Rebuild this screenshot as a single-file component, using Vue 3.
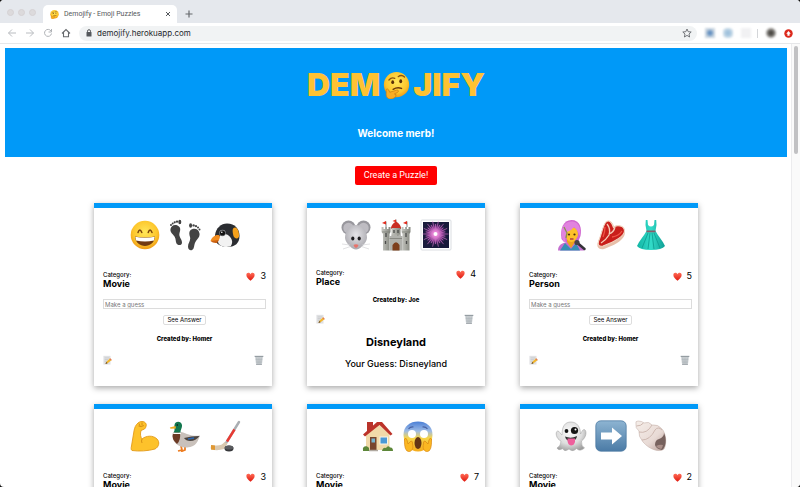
<script setup>
import { ref } from 'vue'

const puzzles = ref([
  { id: 1, emojis: ['grin', 'feet', 'penguin'], category: 'Movie', likes: 3, author: 'Homer', guess: '' },
  { id: 2, emojis: ['mouse', 'castle', 'firework'], category: 'Place', likes: 4, author: 'Joe', guess: 'Disneyland', answer: 'Disneyland', solved: true },
  { id: 3, emojis: ['singer', 'steak', 'dress'], category: 'Person', likes: 5, author: 'Homer', guess: '' },
  { id: 4, emojis: ['muscle', 'duck', 'hockey'], category: 'Movie', likes: 3, author: 'Homer', guess: '' },
  { id: 5, emojis: ['house', 'scream'], category: 'Movie', likes: 7, author: 'Homer', guess: '' },
  { id: 6, emojis: ['ghost', 'arrow', 'shell'], category: 'Movie', likes: 2, author: 'Joe', guess: '' },
])

const rays = Array.from({ length: 28 }, (_, i) => {
  const a = (i * Math.PI) / 14
  const r = i % 2 ? 10 : 13
  return { x: 15.5 + Math.cos(a) * r, y: 15 + Math.sin(a) * r }
})
</script>

<template>
  <svg class="sprite" aria-hidden="true">
    <defs>
      <radialGradient id="gFace" cx=".5" cy=".4" r=".6">
        <stop offset="0" stop-color="#ffe75a" /><stop offset=".7" stop-color="#fdc62c" /><stop offset="1" stop-color="#ee9a16" />
      </radialGradient>
      <linearGradient id="gScream" x1="0" y1="0" x2="0" y2="1">
        <stop offset="0" stop-color="#4a7fd6" /><stop offset=".32" stop-color="#9dbbe6" /><stop offset=".55" stop-color="#f7d54a" /><stop offset="1" stop-color="#f5ab1b" />
      </linearGradient>
      <linearGradient id="gArrow" x1="0" y1="0" x2="0" y2="1">
        <stop offset="0" stop-color="#8db4d2" /><stop offset="1" stop-color="#4b7ba6" />
      </linearGradient>
      <radialGradient id="gGhost" cx=".45" cy=".35" r=".7">
        <stop offset="0" stop-color="#fafafa" /><stop offset=".6" stop-color="#dedede" /><stop offset="1" stop-color="#9c9c9c" />
      </radialGradient>
      <radialGradient id="gMouse" cx=".5" cy=".4" r=".65">
        <stop offset="0" stop-color="#e6e5e9" /><stop offset="1" stop-color="#a5a4aa" />
      </radialGradient>
      <linearGradient id="gStone" x1="0" y1="0" x2="1" y2="0">
        <stop offset="0" stop-color="#c6c7c1" /><stop offset="1" stop-color="#85877f" />
      </linearGradient>
      <radialGradient id="gBurst">
        <stop offset="0" stop-color="#fff" /><stop offset=".2" stop-color="#f79be0" /><stop offset=".6" stop-color="#9a3a9d" stop-opacity=".7" /><stop offset="1" stop-color="#30204f" stop-opacity="0" />
      </radialGradient>
      <linearGradient id="gDress" x1="0" y1="0" x2="1" y2="0">
        <stop offset="0" stop-color="#12b5a4" /><stop offset=".5" stop-color="#32dbc8" /><stop offset="1" stop-color="#0f9f95" />
      </linearGradient>
      <linearGradient id="gShell" x1="0" y1="0" x2="1" y2="1">
        <stop offset="0" stop-color="#f6efea" /><stop offset=".6" stop-color="#e8dad5" /><stop offset="1" stop-color="#b59b95" />
      </linearGradient>
      <linearGradient id="gHeart" x1="0" y1="0" x2="0" y2="1">
        <stop offset="0" stop-color="#ff6a55" /><stop offset="1" stop-color="#e0190f" />
      </linearGradient>
    </defs>

    <symbol id="thinking" viewBox="0 0 32 32">
      <circle cx="16" cy="15" r="15" fill="url(#gFace)" />
      <ellipse cx="11.500" cy="12" rx="1.700" ry="2.300" fill="#5a2f08" />
      <ellipse cx="21" cy="11" rx="1.700" ry="2.300" fill="#5a2f08" />
      <path d="M7 9.500Q10 6 14 7.500M18 5.500Q22 2.500 25.500 6" stroke="#8a5410" stroke-width="1.500" fill="none" stroke-linecap="round" />
      <path d="M12 20.500Q17 17.500 22 19.500" stroke="#6d3a0b" stroke-width="1.600" fill="none" stroke-linecap="round" />
      <path d="M4 23C3 20.500 5 19 6.500 21L8 24L16 21.500C18.500 21 19.200 23.300 17 24.300L13.500 26L15.500 27C15.500 30 12.500 32 9 32C5 32 3 29 4 23Z" fill="#f9ad24" stroke="#c67a12" stroke-width=".8" />
    </symbol>

    <symbol id="grin" viewBox="0 0 32 32">
      <circle cx="16" cy="16" r="14.300" fill="url(#gFace)" />
      <path d="M9 13.500Q10.800 8.500 12.800 13.500M19.200 13.500Q21 8.500 23 13.500" fill="none" stroke="#7b430b" stroke-width="1.500" stroke-linecap="round" />
      <path d="M6 17.500Q16 19.500 26 17.500C25.500 30 6.500 30 6 17.500Z" fill="#713a12" />
      <path d="M6.300 17.800Q16 19.700 25.700 17.800L25 21.500Q16 23.500 7 21.500Z" fill="#fff" />
    </symbol>

    <symbol id="feet" viewBox="0 0 32 32">
      <g fill="#434343">
        <path d="M1.500 10C2 7 5 5 8.500 6.500C12 8 11.500 11 10.500 14C9.500 18 13 20 13 23.500C13 26.800 8.500 27 7.300 24C6.500 22 7 20 5.500 17.500C3.500 14.500 1 13.500 1.500 10Z" />
        <circle cx="2" cy="6" r="1" /><circle cx="3.700" cy="4.500" r="1" /><circle cx="5.700" cy="3.300" r="1.100" /><circle cx="8" cy="2.600" r="1.200" /><ellipse cx="10.800" cy="3" rx="1.500" ry="2.300" />
        <path d="M30.500 14.500C30 11 27 9 23.500 10C19.500 11.500 20 15 21 18C22 22 19 24 19 27.500C19 31.700 23 32.500 24.500 29.500C25.500 27 25 25 27 22C29 19 31 18 30.500 14.500Z" />
        <circle cx="30.500" cy="10.500" r="1" /><circle cx="29" cy="8.500" r="1" /><circle cx="27" cy="7.200" r="1.100" /><circle cx="24.600" cy="6.400" r="1.200" /><ellipse cx="21.600" cy="6.500" rx="1.500" ry="2.300" />
      </g>
    </symbol>

    <symbol id="penguin" viewBox="0 0 32 32">
      <path d="M6 16C7 9 12 4.500 18 4.500C26 4.500 30.500 10 30.500 17C30.500 24 26 28 19 28C12 28 6 25 6 19Z" fill="#2b2d31" />
      <path d="M9 22C9 17 14 13.500 18 15.500C22.500 18 25 23 21.500 27.500C15 29 9 27 9 22Z" fill="#f2f2f2" />
      <path d="M24.500 9C27.500 6.500 30.500 12 30 17.500C28.500 21 25.500 19.500 24.500 17C23.800 14.500 23 10.500 24.500 9Z" fill="#f5a11c" />
      <path d="M1.500 22C3 18 7 15 10.500 16.500C11.500 19 10 22 7 22.500Z" fill="#f28c1e" />
      <path d="M1.500 22L10 21L8 24Q4 24.500 1.500 22Z" fill="#c96012" />
      <circle cx="13.500" cy="14" r="3.200" fill="#8d9094" /><circle cx="13.500" cy="14" r="2.600" fill="#111" /><circle cx="12.800" cy="13.300" r=".8" fill="#fff" />
    </symbol>

    <symbol id="mouse" viewBox="0 0 32 32">
      <circle cx="8.500" cy="8.500" r="7" fill="#98979d" /><circle cx="8.500" cy="9" r="5.200" fill="#bebcc2" />
      <circle cx="23.500" cy="8.500" r="7" fill="#98979d" /><circle cx="23.500" cy="9" r="5.200" fill="#bebcc2" />
      <path d="M16 6C23 6 27 12 27 19C26.500 24 20 30.500 16 30.500C12 30.500 5.500 24 5 19C5 12 9 6 16 6Z" fill="url(#gMouse)" />
      <path d="M10 26L2 25M10.500 27.500L3 30M22 26L30 25M21.500 27.500L29 30" stroke="#d4d4d7" stroke-width=".7" />
      <ellipse cx="12.800" cy="19.500" rx="1.600" ry="2" fill="#201f21" /><ellipse cx="19.200" cy="19.500" rx="1.600" ry="2" fill="#201f21" />
      <path d="M13.500 26Q16 24.500 18.500 26Q17.500 29 16 29Q14.500 29 13.500 26Z" fill="#e8726a" />
    </symbol>

    <symbol id="castle" viewBox="0 0 32 32">
      <path d="M6 8V2.500M16 4V.5M27 8V2.500" stroke="#666" stroke-width=".8" />
      <path d="M6 2L2 4L6 5.500ZM27 2L23 4L27 5.500ZM16 .5L12.500 2L16 3.300Z" fill="#e22b1d" />
      <path d="M11 10Q11 5 16 2.500Q21 5 21 10Z" fill="#c92f24" />
      <rect x="11.500" y="9" width="9" height="10" fill="url(#gStone)" />
      <path d="M1.500 8H3.500V10H5V8H7V10H8.500V8H10.500V13L9.500 15V31.500H3V15L1.500 13Z" fill="url(#gStone)" />
      <path d="M21.500 8H23.500V10H25V8H27V10H28.500V8H30.500V13L29.500 15V31.500H22.500V15L21.500 13Z" fill="url(#gStone)" />
      <path d="M9.500 17H11.500V15.500H13.500V17H15V15.500H17V17H18.500V15.500H20.500V17H22.500V31.500H9.500Z" fill="#b0b1ac" />
      <path d="M12.500 31.500V26Q16 20.500 19.500 26V31.500Z" fill="#7d3f1d" />
      <path d="M6 14V18M26 14V18M14 11V14M18 11V14M5.500 22V25M26.500 22V25" stroke="#4a4b4a" stroke-width="1.300" />
      <path d="M2 13H10M22 13H30M9.500 19.500H22" stroke="#777971" stroke-width=".7" />
    </symbol>

    <symbol id="firework" viewBox="0 0 32 32">
      <rect x="1" y="1" width="30" height="30" rx="1" fill="#fff" stroke="#d2d5da" stroke-width=".8" />
      <rect x="3" y="3" width="26" height="26" fill="#181a3b" />
      <circle cx="15.500" cy="15" r="12" fill="url(#gBurst)" />
      <path v-for="(ray, i) in rays" :key="i" :d="`M15.5 15L${ray.x} ${ray.y}`" stroke="#e07bd3" stroke-width=".6" />
      <circle cx="15.500" cy="15" r="2" fill="#fff" />
    </symbol>

    <symbol id="singer" viewBox="0 0 32 32">
      <path d="M6.500 20C5 10 8 1 16.500 1C25 1 27 9 25.500 17L23 23H9Z" fill="#d066cf" />
      <path d="M3 31.500C3 26 7 24 12 23H20C25 24 29 27 29 31.500Z" fill="#c46fd0" />
      <path d="M5 31.500L10 24L16 30L21 24L25 31.500Z" fill="#358fb5" />
      <path d="M12 23L16 29L20 23V19H12Z" fill="#eda21c" />
      <path d="M10 12C10 8 14 7 17 8C22 9 23 12 23 16C22 20 19 23 16.500 23C13 23 10 19 10 12Z" fill="#fdc12a" />
      <path d="M7 17C5 7 11 1.500 18 2.500C25 4 26 11 24.500 17Q23 11 19 8Q16 12 12 13Q9 17 11 24Q7 22 7 17Z" fill="#e183df" />
      <path d="M9 8L12 14L11 19" stroke="#8a9150" stroke-width="1.300" fill="none" />
      <circle cx="14" cy="15.500" r="1.100" fill="#4d2a11" /><circle cx="19.500" cy="15.500" r="1.100" fill="#4d2a11" />
      <path d="M15 20H18.500" stroke="#a82a45" stroke-width="1.300" />
      <path d="M23 24.500L29.500 30" stroke="#343338" stroke-width="2.500" stroke-linecap="round" /><circle cx="22" cy="23.500" r="2.600" fill="#45444a" />
    </symbol>

    <symbol id="steak" viewBox="0 0 32 32">
      <path d="M11 3C14 0 18 3 19 8C21 5 30 6 30 13C30 22 17 27 9 30C4 31 1 28 3 23C6 16 7 8 11 3Z" fill="#e7bfa9" />
      <path d="M11 3C14 .5 17 3 18.500 8.500C21 5.500 29.500 6 29.500 12C29 19 16 24 8 27C4 28 2.500 26 3.500 22.500C6.500 16 7.500 7 11 3Z" fill="#c91f1b" stroke="#f3d8c5" stroke-width="1.100" />
      <path d="M12 5Q16 10 14 16Q11 21 6 24M14 15Q19 13 20 8" stroke="#f5cdb8" stroke-width="1.300" fill="none" />
      <path d="M17 18Q24 17 27 12M10 8Q10 13 8 18" stroke="#ee5547" stroke-width="1.300" fill="none" />
    </symbol>

    <symbol id="dress" viewBox="0 0 32 32">
      <path d="M10.800 1H12.500L13 6Q16 9 19 6L19.500 1H21.200L21.500 6L20.500 12C23 17 28 22 30 27Q27 31 16 31Q5 31 2 27C4 22 9 17 11.500 12L10.500 6Z" fill="url(#gDress)" />
      <path d="M11.500 11.500H20.500V13.300H11.500Z" fill="#8b5b69" />
      <path d="M13 14L7 29M15 14L13 30M17 14L19 30M19 14L25 29" stroke="#0b9a8e" stroke-width=".8" />
    </symbol>

    <symbol id="muscle" viewBox="0 0 32 32">
      <path d="M9 3C11 1 15 1 16.500 3C18 4 17 8 15.500 9L12 10.500C11 14 11.500 17 13 19C17 15.500 24 15 28 19C31 22 30 27 26 29C19 31 10 31.500 3 30.500C2 30 2 28 2.500 26L5 11C5.500 8 6.500 5 9 3Z" fill="#fdc22b" stroke="#e29a18" stroke-width=".9" />
      <path d="M9.500 6Q12 7.500 15 5.500M10 3.500L11 6M13 2.500V5.500M13 19Q12 21 13 23" fill="none" stroke="#d28b13" stroke-width=".9" />
    </symbol>

    <symbol id="duck" viewBox="0 0 32 32">
      <path d="M12 26L13 30L9 31M16 26V30L12 31.500" stroke="#ed7d21" stroke-width="1.800" fill="none" />
      <path d="M4 14C8 10 14 12 18 14C23 16 28 16 31 15.500C29 20 28 27 18 27.500C9 28 2 21 4 14Z" fill="#c9c1bb" />
      <path d="M4 13Q9 10 11 13Q12 20 8 24Q2 19 4 13Z" fill="#6c3a25" />
      <path d="M15 18Q22 16 30.500 16Q27 21 21 21Q17 21 15 18Z" fill="#4c4540" /><path d="M19 19L25 18" stroke="#2d67b1" stroke-width="1.700" />
      <path d="M4.500 12.500L11.500 12.500L12 14L4 14Z" fill="#fff" />
      <path d="M5.500 5C6 1 12 .5 13 5C13.500 8 11 10 11.500 12.500H4.500C6.500 10 5 8 5.500 5Z" fill="#12774e" />
      <path d="M6.500 6L.8 7.500L1.500 8.800L7 8.500Z" fill="#efac23" /><circle cx="8.300" cy="5" r=".8" fill="#111" />
    </symbol>

    <symbol id="hockey" viewBox="0 0 32 32">
      <path d="M30 2L17 23" stroke="#aaaeb2" stroke-width="2.400" stroke-linecap="round" />
      <path d="M25.500 9.500L18 21.500" stroke="#e73a33" stroke-width="2.500" />
      <path d="M15.500 22L18.500 23.500L15 29Q9 31 2 29.500Q1 26 3 25Q12 27 15.500 22Z" fill="#d9c8b0" />
      <path d="M2 25L6 25.500V30L2 29.500Z" fill="#e09833" />
      <ellipse cx="20" cy="28.500" rx="4.500" ry="3" fill="#37383b" /><ellipse cx="20" cy="27.500" rx="4.300" ry="2" fill="#5a5b5e" />
    </symbol>

    <symbol id="house" viewBox="0 0 32 32">
      <path d="M5 2H11V12H5Z" fill="#b9332a" />
      <path d="M4 14L16 4L27.500 14V30H4Z" fill="#f1d9a9" />
      <path d="M1 14.500L15 2H20L30.500 14L28.500 15.500L17.500 5L3 16.500Z" fill="#bc3329" />
      <rect x="8" y="17" width="6.500" height="13" fill="#78442c" /><rect x="9.500" y="18.500" width="3.500" height="4" fill="#76b3cf" />
      <rect x="17.500" y="16.500" width="8.500" height="8" fill="#f8f4e9" /><rect x="18.500" y="17.500" width="6.500" height="6" fill="#4b99d6" />
      <path d="M1 30C0 26 5 25 7 28V31H1ZM20 31Q21 27 24 28Q26 25 28 27.500Q31 27 31 31Z" fill="#5d8739" /><path d="M7 30.500H16" stroke="#b1aaa1" stroke-width="1.500" />
    </symbol>

    <symbol id="scream" viewBox="0 0 32 32">
      <path d="M1.500 15C1.500 6 8 1.500 16 1.500S30.500 6 30.500 15C30 25 24 31.500 16 31.500S2 25 1.500 15Z" fill="url(#gScream)" />
      <circle cx="10" cy="14" r="4" fill="#fff" /><circle cx="22" cy="14" r="4" fill="#fff" />
      <path d="M6.500 9Q8.500 6.500 11.500 7M20.500 7Q23.500 6.500 25.500 9" stroke="#4861a2" stroke-width="1.200" fill="none" />
      <ellipse cx="16" cy="23" rx="3.500" ry="6" fill="#633415" />
      <path d="M2.500 19Q4 17 5 20L6 24L9 21Q11 21 10.500 24C12 29 9 32 6.500 31.500Q2 31 2.500 19ZM29.500 19Q28 17 27 20L26 24L23 21Q21 21 21.500 24C20 29 23 32 25.500 31.500Q30 31 29.500 19Z" fill="#fbb722" stroke="#d98713" stroke-width=".7" />
    </symbol>

    <symbol id="ghost" viewBox="0 0 32 32">
      <path d="M7 15C7 6 10 2 16 2C22 2 25.500 7 25.500 14C27 12 27 10 29 9.500C32 10 32 17 26.500 21Q26 26 29.500 28Q25 32 21.500 28.500Q18 32.500 14 29Q9 32.500 8 28.500Q3.500 31 2 28Q6 26 6 21C1 19 0 12 2.500 11C5 11 5 14 7 15Z" fill="url(#gGhost)" stroke="#9c9c9c" stroke-width=".5" />
      <circle cx="11.500" cy="11" r="1.900" fill="#151515" /><circle cx="19.500" cy="10.500" r="3.600" fill="#151515" /><circle cx="20.500" cy="9.500" r="1" fill="#fff" />
      <path d="M10 16.500Q16 19 22 16Q21.500 21 16 21Q11 21 10 16.500Z" fill="#333" />
      <path d="M12.500 18.500H20V22Q19 25.500 16 25.500Q13 25 12.500 21Z" fill="#ee5f9c" />
    </symbol>

    <symbol id="arrow" viewBox="0 0 32 32">
      <rect x=".8" y=".8" width="30.400" height="30.400" rx="5" fill="url(#gArrow)" stroke="#45749d" stroke-width=".7" />
      <path d="M6 12.500H17V7.500L27 16L17 24.500V19.500H6Z" fill="#fff" />
    </symbol>

    <symbol id="shell" viewBox="0 0 32 32">
      <path d="M1 4Q0 1 3 1Q7 1 9 3Q14 1 17 5Q23 4 27 9C31 13 32 24 29 29C24 33 14 29 8 22Q3 16 4 11Q0 8 1 4Z" fill="url(#gShell)" stroke="#c7b5af" stroke-width=".6" />
      <path d="M1.500 6Q6 6 8.500 3M4 12Q12 14 17 5M7 20Q15 20 20 10Q23 6 27 10" stroke="#c9b3ac" stroke-width=".9" fill="none" />
      <path d="M29 13C32 19 31 27 27 30Q21 29 20 25Q20 20 24 19Q29 17 29 13Z" fill="#77625e" /><path d="M21 26Q25 24 28 25Q27 29 26 29Q22 28 21 26Z" fill="#aa8f89" />
    </symbol>

    <symbol id="heart" viewBox="0 0 12 12">
      <path d="M6 11.500C2.500 9 .5 6.500.5 4C.5.500 4.500.200 6 3C7.500.200 11.500.500 11.500 4C11.500 6.500 9.500 9 6 11.500Z" fill="url(#gHeart)" />
    </symbol>

    <symbol id="memo" viewBox="0 0 12 12">
      <rect x=".5" y="1" width="8.500" height="10.500" fill="#e0e1e3" /><path d="M2 3.500H7.500M2 5.500H6M2 7.500H5" stroke="#c0c2c5" stroke-width=".8" />
      <path d="M8.500 4L10.500 6L5.500 10L3 10.700L3.800 8.300Z" fill="#f2b52c" /><path d="M8.500 4L10.500 6L9.700 6.700L7.900 4.700Z" fill="#df6b67" /><path d="M3.800 8.300L5.500 10L3 10.700Z" fill="#594433" />
    </symbol>

    <symbol id="bin" viewBox="0 0 12 12">
      <path d="M1.300 2H10.700L9.500 11.500H2.500Z" fill="#cbd0d3" /><path d="M3 3L4 11M5 3L5.300 11M7 3L6.700 11M9 3L8 11M2 5.500H10M2.300 8.500H9.700" stroke="#a5acb1" stroke-width=".5" />
      <path d="M.8 1H11.200V2.300H.8Z" fill="#8d959b" /><path d="M2.500 10.800H9.500V11.800H2.500Z" fill="#9aa1a6" />
    </symbol>
  </svg>

  <div class="browser">
    <div class="tabs">
      <div class="lights"><i /><i /><i /></div>
      <div class="tab">
        <svg class="favicon"><use href="#thinking" /></svg>
        <span class="tab-title">Demojify - Emoji Puzzles</span>
        <button class="plain" aria-label="Close tab">
          <svg class="tiny" viewBox="0 0 8 8"><path d="M2 2L6 6M6 2L2 6" stroke="#55585c" /></svg>
        </button>
      </div>
      <button class="plain new-tab" aria-label="New tab">
        <svg class="plus" viewBox="0 0 8 8"><path d="M4 .5V7.500M.5 4H7.500" stroke="#66696d" stroke-width="1.200" /></svg>
      </button>
    </div>

    <div class="toolbar">
      <button class="plain" aria-label="Back"><svg class="nav" viewBox="0 0 10 10"><path d="M9 5H1.500M5 1.500L1.500 5L5 8.500" fill="none" stroke="#b9bcc0" /></svg></button>
      <button class="plain" aria-label="Forward"><svg class="nav" viewBox="0 0 10 10"><path d="M1 5H8.500M5 1.500L8.500 5L5 8.500" fill="none" stroke="#b9bcc0" /></svg></button>
      <button class="plain" aria-label="Reload"><svg class="nav" viewBox="0 0 10 10"><path d="M8 3A3.500 3.500 0 1 0 8.500 5.500M8.500 1V4H5.500" fill="none" stroke="#b0b3b7" /></svg></button>
      <button class="plain" aria-label="Home"><svg class="nav" viewBox="0 0 10 10"><path d="M1 5.500L5 1.500L9 5.500M2.500 4.500V8.700H7.500V4.500" fill="none" stroke="#66696d" stroke-width="1.100" /></svg></button>
      <div class="address">
        <svg class="lock" viewBox="0 0 6 8"><rect x=".5" y="3" width="5" height="4.500" rx=".5" fill="#55585c" /><path d="M1.500 3.500V2.200A1.500 1.500 0 0 1 4.500 2.200V3.500" fill="none" stroke="#55585c" /></svg>
        <input class="url" aria-label="Address" value="demojify.herokuapp.com" />
        <button class="plain" aria-label="Bookmark"><svg class="star" viewBox="0 0 10 10"><path d="M5 1L6.200 3.700L9.200 4L7 6L7.600 9L5 7.400L2.400 9L3 6L.8 4L3.800 3.700Z" fill="none" stroke="#66696d" stroke-width=".9" /></svg></button>
      </div>
      <div class="extensions"><i class="ext blue" /><i class="ext sky" /><i class="ext pale" /></div>
      <i class="divider" />
      <i class="avatar" />
      <button class="plain" aria-label="Update"><svg class="update" viewBox="0 0 10 10"><circle cx="5" cy="5" r="4.700" fill="#dc2a1d" /><path d="M5 2.300L7.500 5.200H6.200V7.500H3.800V5.200H2.500Z" fill="#fff" /></svg></button>
    </div>

    <div class="viewport">
      <main class="page">
        <header class="banner">
          <h1 class="logo" aria-label="Demojify"><span>DEM</span><svg class="logo-emoji"><use href="#thinking" /></svg><span>JIFY</span></h1>
          <p class="welcome">Welcome merb!</p>
        </header>
        <button class="create">Create a Puzzle!</button>
        <section class="cards">
          <article v-for="p in puzzles" :key="p.id" class="card" :class="{ solved: p.solved }">
            <div class="emojis">
              <svg v-for="e in p.emojis" :key="e" class="emoji"><use :href="'#' + e" /></svg>
            </div>
            <div class="info">
              <div>
                <div class="label">Category:</div>
                <h2 class="category">{{ p.category }}</h2>
              </div>
              <button class="plain likes" aria-label="Like"><svg class="heart"><use href="#heart" /></svg><span>{{ p.likes }}</span></button>
            </div>
            <form v-if="!p.solved" class="guess" @submit.prevent>
              <input v-model="p.guess" class="guess-input" placeholder="Make a guess" aria-label="Make a guess" />
              <button type="button" class="see">See Answer</button>
            </form>
            <p class="author">Created by: {{ p.author }}</p>
            <div class="actions">
              <button class="plain" aria-label="Edit"><svg class="action"><use href="#memo" /></svg></button>
              <button class="plain" aria-label="Delete"><svg class="action"><use href="#bin" /></svg></button>
            </div>
            <template v-if="p.solved">
              <h3 class="answer">{{ p.answer }}</h3>
              <p class="your-guess">Your Guess: {{ p.guess }}</p>
            </template>
          </article>
        </section>
      </main>
      <div class="scrollbar"><div class="thumb" /></div>
    </div>
  </div>
</template>

<style>
body { background: #111; }
</style>

<style scoped>
* { box-sizing: border-box; margin: 0; }
svg { display: block; flex: none; }
.sprite { position: absolute; width: 0; height: 0; }
.plain { display: flex; align-items: center; padding: 0; border: 0; background: none; font: inherit; color: inherit; }
.browser { display: flex; flex-direction: column; height: 100vh; overflow: hidden; border-radius: 4px; background: #fff; font-family: Inter, "Liberation Sans", sans-serif; color: #000; }

.tabs { display: flex; height: 23px; padding-left: 7px; background: #e5e8ed; }
.lights { display: flex; align-items: center; gap: 4px; width: 36px; padding-top: 2px; }
.lights i { width: 7px; height: 7px; border-radius: 50%; background: #dcdadc; border: 1px solid #d5d2d4; }
.tab { display: flex; align-items: center; gap: 5px; width: 134px; margin-top: 5px; padding: 0 5px 0 7px; border-radius: 5px 5px 0 0; background: #fff; }
.favicon { width: 9px; height: 9px; }
.tab-title { flex: 1; font: 7px/10px Roboto, sans-serif; color: #55585c; white-space: nowrap; }
.tiny, .plus { width: 8px; height: 8px; }
.new-tab { padding: 5px 0 0 8px; }

.toolbar { display: flex; align-items: center; gap: 8px; height: 21px; padding: 0 7px; border-bottom: 1px solid #e6e7e9; }
.nav { width: 10px; height: 10px; }
.address { display: flex; flex: 1; align-items: center; height: 15px; padding: 0 5px 0 7px; border-radius: 8px; background: #f1f3f4; }
.lock { width: 6px; height: 8px; }
.url { flex: 1; min-width: 0; margin-left: 5px; padding: 0; border: 0; outline: 0; background: none; font: 8px/14px Inter, sans-serif; color: #25282c; }
.star { width: 10px; height: 10px; }
.extensions { display: flex; gap: 8px; margin-right: -2px; }
.ext { width: 10px; height: 10px; filter: blur(1px); }
.blue { background: radial-gradient(#5f8dc0 20%, #ccd7e1 60%); }
.sky { border-radius: 4px; background: radial-gradient(#9dc0dc 20%, #d6e3ec 80%); }
.pale { background: #f1f1f3; }
.divider { width: 1px; height: 9px; background: #d4d6d9; }
.avatar { width: 10px; height: 10px; border-radius: 50%; background: radial-gradient(#46443f 20%, #aaa8a5 70%); filter: blur(1px); }
.update { width: 9px; height: 9px; }

.viewport { display: flex; flex: 1; min-height: 0; }
.page { display: flex; flex: 1; flex-direction: column; align-items: center; min-width: 0; padding: 4px 4px 0 5px; overflow: hidden; }
.scrollbar { width: 9px; padding: 2px; border-left: 1px solid #ececee; background: #fafafa; }
.thumb { height: 108px; border-radius: 3px; background: #c1c1c3; }

.banner { flex: none; align-self: stretch; height: 109px; padding-top: 18px; background: #0099f8; text-align: center; }
.logo { display: flex; justify-content: center; align-items: center; gap: 3px; font-size: 32px; font-weight: 900; line-height: 38px; color: #ffc233; }
.logo-emoji { width: 27px; height: 27px; }
.welcome { margin-top: 23px; font-size: 10px; font-weight: 700; line-height: 12px; color: #fff; }
.create { flex: none; height: 19px; margin-top: 9px; padding: 0 9px; border: 0; border-radius: 2px; background: #f00; font: 9px/19px Roboto, sans-serif; color: #fff; }
.cards { display: grid; grid-template-columns: repeat(3, 178px); column-gap: 35px; row-gap: 18px; margin-top: 18px; }
.card { height: 183px; padding: 11px 6px 0 9px; border-top: 5px solid #0099f8; background: #fff; box-shadow: 0 2px 6px rgba(0, 0, 0, 0.35); }
.emojis { display: flex; justify-content: center; gap: 8px; }
.emoji { width: 32px; height: 32px; }
.info { display: flex; justify-content: space-between; margin-top: 19px; }
.label { font-size: 6px; font-weight: 500; line-height: 9px; }
.category { font-size: 9px; font-weight: 700; line-height: 10px; }
.likes { gap: 5px; height: 12px; font-size: 9px; line-height: 12px; }
.heart { width: 9px; height: 9px; }
.guess { display: flex; flex-direction: column; align-items: center; gap: 6px; margin-top: 10px; }
.guess-input { width: 100%; height: 10px; padding: 0 1px; border: 1px solid #dcdcdc; font: 6px/8px Inter, sans-serif; }
.guess-input::placeholder { color: #777; opacity: 1; }
.see { height: 10px; padding: 0 4px; border: 1px solid #ddd; border-radius: 2px; background: #fff; font: 6px/8px Inter, sans-serif; color: #000; }
.author { margin-top: 9px; font-size: 6px; font-weight: 800; line-height: 10px; text-align: center; }
.actions { display: flex; justify-content: space-between; margin-top: 11px; padding-right: 2px; }
.action { width: 10px; height: 10px; }
.solved { padding-right: 9px; }
.solved .info { margin-top: 17px; }
.solved .author { margin-top: 8px; }
.solved .actions { margin-top: 9px; }
.answer { margin-top: 11px; font-size: 11px; font-weight: 700; line-height: 14px; text-align: center; }
.your-guess { margin-top: 9px; font-size: 9px; font-weight: 500; line-height: 12px; text-align: center; }
</style>
